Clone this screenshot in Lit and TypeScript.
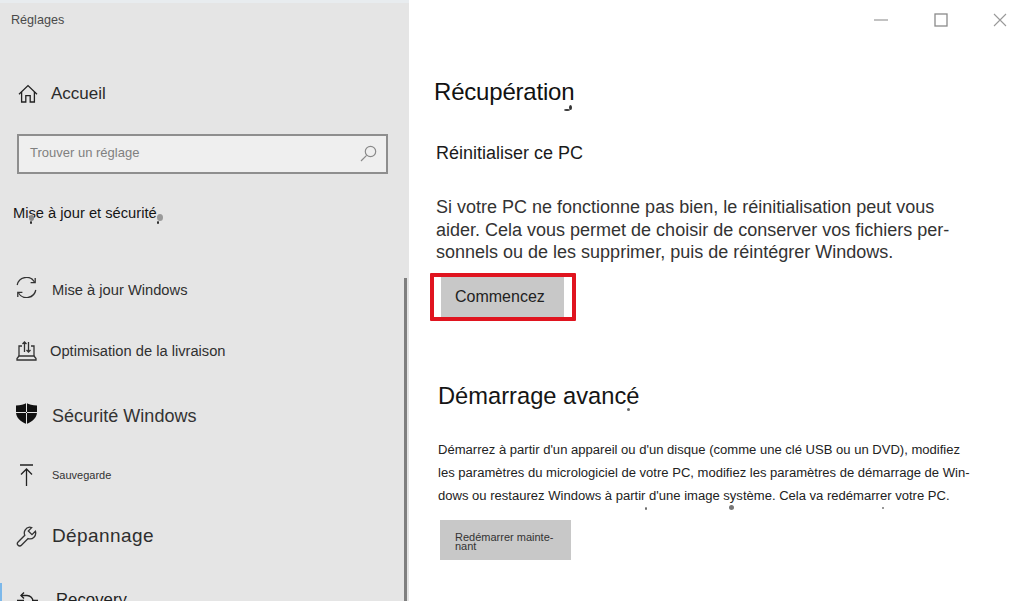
import { LitElement, html, css } from "lit";
import { customElement } from "lit/decorators.js";

const SPECKS = [
  [29, 215, 5, 6, "#8a8a8a"], [30, 221, 2, 3, "#222"],
  [157, 214, 6, 7, "#9a9a9a"], [157, 221, 2, 3, "#222"],
  [564, 109, 6, 2, "#333"], [569, 105, 3, 5, "#333"],
  [627, 408, 3, 3, "#666"],
  [645, 507, 2, 3, "#666"], [729, 505, 5, 5, "#777"], [882, 507, 2, 2, "#777"],
];

@customElement("app-root")
export class AppRoot extends LitElement {
  static styles = css`
    :host { display: block; width: 1021px; height: 601px; overflow: hidden; font-family: "Liberation Sans", Arial, sans-serif; color: #222; background: #fff; }
    * { box-sizing: border-box; }
    .win { position: relative; display: flex; width: 1021px; height: 601px; overflow: hidden; }
    .speck { position: absolute; border-radius: 50%; }
    .side { position: relative; width: 409px; height: 601px; flex: none; background: #e5e5e5; box-shadow: inset 0 3px 0 #e8ecef; overflow: hidden; padding: 13px 0 0 11px; }
    .title { font-size: 12.6px; line-height: 15px; color: #4a4a4a; }
    .home { display: flex; align-items: center; margin: 54px 0 0 7px; height: 24px; font-size: 17px; color: #2b2b2b; }
    .home svg { margin-right: 13px; }
    .search { display: flex; align-items: center; justify-content: space-between; width: 371px; height: 40px; margin: 28px 0 0 6px; padding: 0 9px 4px 11px; background: #efefef; border: 2px solid #8e8e8e; font-size: 13px; color: #808080; }
    .search svg { margin-top: 2px; }
    .cat { margin: 30px 0 0 2px; font-size: 14.7px; line-height: 18px; color: #151515; }
    .items { display: flex; flex-direction: column; margin: 0 0 0 5px; }
    .item { display: flex; align-items: center; flex: none; }
    .item svg { flex: none; }
    .i1 { margin-top: 56px; height: 24px; font-size: 14.7px; color: #303030; gap: 15px; }
    .i1 svg { margin-bottom: 5px; }
    .i2 { margin-top: 37px; height: 24px; font-size: 14.7px; color: #303030; gap: 13px; }
    .i3 { margin-top: 40px; height: 26px; font-size: 18px; color: #333; gap: 15px; letter-spacing: 0.03px; }
    .i3 svg { margin-bottom: 6px; }
    .i4 { margin-top: 34px; height: 24px; font-size: 11px; color: #333; gap: 15px; }
    .i5 { margin-top: 36px; height: 26px; font-size: 19px; color: #2e2e2e; gap: 15px; letter-spacing: 0.4px; }
    .i6 { margin-top: 39px; height: 24px; font-size: 16.8px; color: #222; gap: 18px; margin-left: 1px; }
    .i6 svg { margin-top: 6px; }
    .marker { position: absolute; left: 0; top: 583px; width: 2px; height: 18px; background: #7cb8ea; }
    .scroll { position: absolute; left: 404px; top: 278px; width: 3px; height: 323px; background: #7f7f7f; }
    .main { position: relative; flex: 1; min-width: 0; background: #fff; padding: 77px 0 0 25px; }
    .controls { position: absolute; top: 13px; right: 14px; display: flex; gap: 45.500px; align-items: center; }
    h1 { margin: 0; font-size: 24px; line-height: 30px; font-weight: 400; color: #111; letter-spacing: -0.2px; }
    h2 { margin: 36px 0 0 2px; font-size: 18px; line-height: 20px; font-weight: 400; color: #1a1a1a; }
    .para { width: 530px; margin: 33px 0 0 2px; font-size: 18px; line-height: 22.6px; color: #333; }
    .para span, .small span { display: block; white-space: nowrap; }
    .box { width: 146px; height: 48px; margin: 9px 0 0 -4px; border: 4px solid #e0141f; padding: 0 7px; border-radius: 1px; }
    .box div { height: 100%; width: 123px; background: #c8c8c8; font-size: 16px; display: flex; align-items: center; padding: 1px 0 0 14px; color: #222; }
    h3 { margin: 60px 0 0 4px; font-size: 23.700px; line-height: 30px; font-weight: 400; color: #151515; }
    .small { margin: 27px 0 0 4px; font-size: 13.050px; line-height: 23px; color: #222; }
    .btn2 { width: 131px; height: 40px; margin: 13px 0 0 6px; background: #c8c8c8; padding: 13px 0 0 15px; font-size: 11px; line-height: 9px; color: #333; }
  `;

  render() {
    return html`<div class="win">
      <aside class="side">
        <div class="title">Réglages</div>
        <div class="home">
          <svg width="20" height="20" viewBox="0 0 20 20" fill="none" stroke="#222" stroke-width="1.3"><path d="M1 10.200 10 1.600l9 8.600"/><path d="M3.600 8v10h4.200v-6.400h4.400V18h4.200V8"/></svg>
          Accueil
        </div>
        <div class="search">
          <span>Trouver un réglage</span>
          <svg width="17" height="17" viewBox="0 0 17 17" fill="none" stroke="#8a8a8a" stroke-width="1.2"><circle cx="10.500" cy="6.500" r="5.200"/><path d="M6.600 10.400 1 16"/></svg>
        </div>
        <div class="cat">Mise à jour et sécurité</div>
        <div class="items">
          <div class="item i1">
          <svg width="21" height="21" viewBox="0 0 21 21" fill="none" stroke="#333" stroke-width="1.3"><path d="M1.200 8A9.400 9.400 0 0 1 18.500 5"/><path d="M19.200 1v4.600h-4.600"/><path d="M19.800 13A9.400 9.400 0 0 1 2.500 16"/><path d="M1.800 20v-4.600h4.600"/></svg>
          Mise à jour Windows</div>
          <div class="item i2">
          <svg width="21" height="20" viewBox="0 0 21 20" fill="none" stroke="#333" stroke-width="1.3"><path d="M3 15V5h3M18 15V5h-3"/><path d="M8.500 11V1M6.500 3 8.500 1l2 2M12.500 1v10M10.500 9l2 2 2-2"/><path d="M3 15 1 17.500V19h19v-1.500L18 15z"/></svg>
          Optimisation de la livraison</div>
          <div class="item i3">
          <svg width="21" height="21" viewBox="0 0 21 21" fill="#111"><path d="M10.500 0C8 1.600 4.500 2.400 0 2.600V9c0 5.500 4 9.400 10.500 12C17 18.400 21 14.500 21 9V2.600C16.500 2.400 13 1.600 10.500 0Z"/><path d="M10 0v21h1V0zM0 9h21v1H0z" fill="#e5e5e5"/></svg>
          Sécurité Windows</div>
          <div class="item i4">
          <svg width="21" height="22" viewBox="0 0 21 22" fill="none" stroke="#222" stroke-width="1.3"><path d="M4 1h13M10.500 22V5M5 10.500 10.500 5l5.500 5.500"/></svg>
          Sauvegarde</div>
          <div class="item i5">
          <svg width="21" height="21" viewBox="0 0 21 21" fill="none" stroke="#333" stroke-width="1.3"><path d="M13.500 1.200a5.800 5.800 0 0 1 2.200.4l-3.400 3.400 3.700 3.700 3.400-3.400a5.800 5.800 0 0 1-7.300 7.300l-6.700 6.700a2.300 2.300 0 0 1-3.300-3.300l6.700-6.700a5.800 5.800 0 0 1 4.700-8.100Z"/></svg>
          Dépannage</div>
          <div class="item i6">
          <svg width="21" height="22" viewBox="0 0 21 22" fill="none" stroke="#222" stroke-width="1.4"><path d="M7 0.500 4 3.500l3 3"/><path d="M4 3.500h6a6 6 0 0 1 0 12"/><path d="M0 8.500h7M15 8.500h6"/></svg>
          Recovery</div>
        </div>
        <div class="marker"></div>
        <div class="scroll"></div>
      </aside>
      <main class="main">
        <div class="controls">
          <svg width="14" height="14" viewBox="0 0 14 14" fill="none" stroke="#999" stroke-width="1.2"><path d="M0 7h14"/></svg>
          <svg width="14" height="14" viewBox="0 0 14 14" fill="none" stroke="#8a8a8a" stroke-width="1.300"><rect x="1" y="1" width="12" height="12"/></svg>
          <svg width="14" height="14" viewBox="0 0 14 14" fill="none" stroke="#999" stroke-width="1.100"><path d="M1 1l12 12M13 1 1 13"/></svg>
        </div>
        <h1>Récupération</h1>
        <h2>Réinitialiser ce PC</h2>
        <p class="para"><span>Si votre PC ne fonctionne pas bien, le réinitialisation peut vous</span><span>aider. Cela vous permet de choisir de conserver vos fichiers per-</span><span>sonnels ou de les supprimer, puis de réintégrer Windows.</span></p>
        <div class="box"><div>Commencez</div></div>
        <h3>Démarrage avancé</h3>
        <p class="small"><span>Démarrez à partir d'un appareil ou d'un disque (comme une clé USB ou un DVD), modifiez</span><span>les paramètres du micrologiciel de votre PC, modifiez les paramètres de démarrage de Win-</span><span>dows ou restaurez Windows à partir d'une image système. Cela va redémarrer votre PC.</span></p>
        <div class="btn2">Redémarrer mainte-<br />nant</div>
      </main>
      ${SPECKS.map(([x, y, w, h, c]) => html`<i class="speck" style="left:${x}px;top:${y}px;width:${w}px;height:${h}px;background:${c}"></i>`)}
    </div>`;
  }
}
